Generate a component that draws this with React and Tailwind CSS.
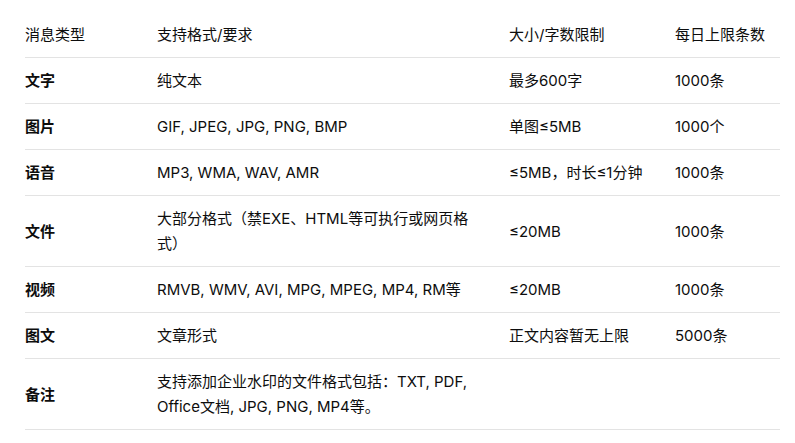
import React from 'react';

const rows = [
  ['文字', '纯文本', '最多600字', '1000条'],
  ['图片', 'GIF, JPEG, JPG, PNG, BMP', '单图≤5MB', '1000个'],
  ['语音', 'MP3, WMA, WAV, AMR', '≤5MB，时长≤1分钟', '1000条'],
  ['文件', '大部分格式（禁EXE、HTML等可执行或网页格式）', '≤20MB', '1000条'],
  ['视频', 'RMVB, WMV, AVI, MPG, MPEG, MP4, RM等', '≤20MB', '1000条'],
  ['图文', '文章形式', '正文内容暂无上限', '5000条'],
  ['备注', '支持添加企业水印的文件格式包括：TXT, PDF, Office文档, JPG, PNG, MP4等。', '', ''],
];

const cell = 'py-[10px] leading-[25px] flex items-center border-b border-[#e3e3e3]';

const App = () => {
  return (
    <div className="w-[795px] h-[443px] bg-white pt-3 pl-[25px] pr-[15px] text-[15px] text-[#0d0d0d]" style={{ fontFamily: 'Inter, "Noto Sans CJK SC", sans-serif' }}>
      <div className="grid grid-cols-[132px_352px_166px_105px]">
        <div className={cell + ' pr-4'}>消息类型</div>
        <div className={cell + ' pr-8'}>支持格式/要求</div>
        <div className={cell + ' pr-2'}>大小/字数限制</div>
        <div className={cell}>每日上限条数</div>
        {rows.map((r, i) => (
          <React.Fragment key={i}>
            <div className={cell + ' pr-4 font-semibold'}>{r[0]}</div>
            <div className={cell + ' pr-8'}>{r[1]}</div>
            <div className={cell + ' pr-2'}>{r[2]}</div>
            <div className={cell}>{r[3]}</div>
          </React.Fragment>
        ))}
      </div>
    </div>
  );
};

export default App;
